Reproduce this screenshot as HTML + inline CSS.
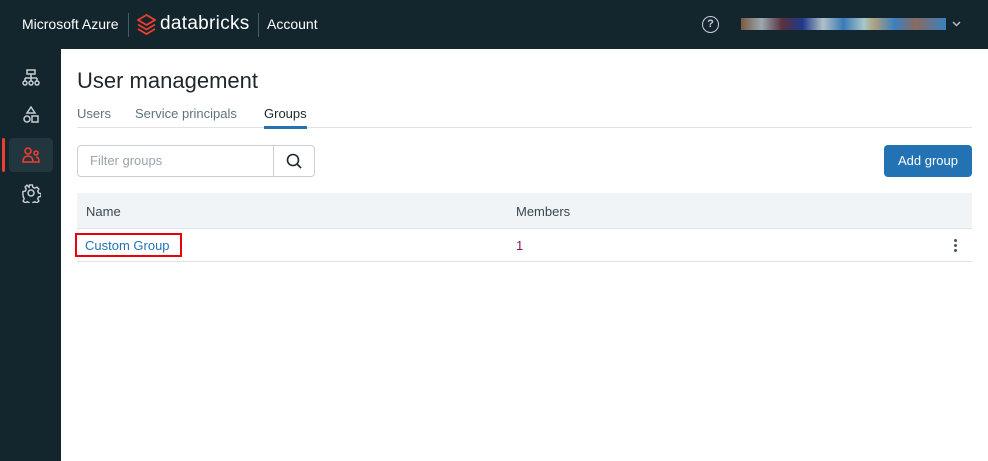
<!DOCTYPE html>
<html><head><meta charset="utf-8"><style>
*{box-sizing:border-box;margin:0;padding:0}
body{width:988px;height:461px;overflow:hidden;background:#fff;font-family:"Liberation Sans",sans-serif;position:relative}
.hdr{position:absolute;left:0;top:0;width:988px;height:49px;background:#13252d;color:#fff}
.side{position:absolute;left:0;top:49px;width:61px;height:412px;background:#13252d}
.main{position:absolute;left:61px;top:49px;right:0;bottom:0;background:#fff}
.in{position:absolute;left:0;top:1px;right:0;bottom:0}
.t{position:absolute;white-space:nowrap}
</style></head><body>
<div class="hdr">
 <div class="t" style="left:22px;top:16px;font-size:14px">Microsoft Azure</div>
 <div style="position:absolute;left:128px;top:13px;width:1px;height:24px;background:#4a5a62"></div>
 <svg style="position:absolute;left:137px;top:14px" width="19" height="21" viewBox="0 0 19 21"><g fill="none" stroke="#ef3e2d" stroke-width="1.8"><path d="M1 6l8.5-5 8.5 5-8.5 5z"/><path d="M1 10.5l8.5 5 8.5-5"/><path d="M1 15l8.5 5 8.5-5"/></g></svg>
 <div class="t" style="left:160px;top:13px;font-size:19px;letter-spacing:0.3px">databricks</div>
 <div style="position:absolute;left:258px;top:13px;width:1px;height:24px;background:#4a5a62"></div>
 <div class="t" style="left:267px;top:16px;font-size:14px">Account</div>
 <div style="position:absolute;left:702px;top:16px;width:17px;height:17px;border:1.6px solid #ccd;border-radius:50%;color:#ccd;font-size:11px;font-weight:bold;text-align:center;line-height:14px">?</div>
 <div style="position:absolute;left:741px;top:18px;width:205px;height:12px;background:linear-gradient(90deg,#7a5a40,#9aa8b0 10%,#5a3040 20%,#1e3a8a 30%,#b0c0c8 40%,#3a7ab8 50%,#a8c8c8 60%,#b0a080 65%,#3a80c0 75%,#8a6a60 85%,#3a80c0)"></div>
 <svg style="position:absolute;left:952px;top:21px" width="9" height="6" viewBox="0 0 9 6" fill="none" stroke="#bbb" stroke-width="1.5"><path d="M1 1l3.5 3.5L8 1"/></svg>
</div>
<div class="side">
 <svg style="position:absolute;left:22px;top:20px" width="18" height="18" viewBox="0 0 18 18" fill="none" stroke="#c8ced2" stroke-width="1.5"><rect x="5" y="1" width="8" height="4"/><path d="M9 5v4M3 9h12M3 9v3M9 9v3M15 9v3"/><circle cx="3" cy="14" r="2"/><circle cx="9" cy="14" r="2"/><circle cx="15" cy="14" r="2"/></svg>
 <svg style="position:absolute;left:22px;top:57px" width="18" height="18" viewBox="0 0 18 18" fill="none" stroke="#c8ced2" stroke-width="1.5"><path d="M9 1l4 6H5z"/><circle cx="5" cy="13" r="3"/><rect x="10" y="10" width="6" height="6"/></svg>
 <div style="position:absolute;left:2px;top:89px;width:3px;height:34px;background:#ef3e2d;border-radius:2px"></div>
 <div style="position:absolute;left:9px;top:89px;width:44px;height:34px;background:#22363f;border-radius:4px"></div>
 <svg style="position:absolute;left:22px;top:97px" width="18" height="18" viewBox="0 0 18 18" fill="none" stroke="#ef3e2d" stroke-width="1.6"><circle cx="6" cy="5" r="3"/><circle cx="14" cy="7" r="2"/><path d="M1 16c0-4 2-6 5-6s5 2 5 6zM12 16h5c0-3-1-5-3-5"/></svg>
 <svg style="position:absolute;left:21px;top:134px" width="20" height="20" viewBox="0 0 20 20" fill="none" stroke="#c8ced2" stroke-width="1.5"><circle cx="10" cy="10" r="3"/><path d="M8.5 1.5h3l.5 2.5 2 1 2.3-1.2 2 2-1.2 2.3 1 2 2.4.5v3l-2.4.5-1 2 1.2 2.3-2 2-2.3-1.2-2 1-.5 2.4h-3l-.5-2.4-2-1-2.3 1.2-2-2 1.2-2.3-1-2L1.5 11.5v-3l2.5-.5 1-2-1.2-2.3 2-2L8 4z" transform="scale(.95) translate(.5 .5)"/></svg>
</div>
<div class="main"><div class="in">
 <div class="t" style="left:16px;top:18px;font-size:22px;color:#1f272d">User management</div>
 <div class="t" style="left:16px;top:56px;font-size:13px;color:#5f7281">Users</div>
 <div class="t" style="left:74px;top:56px;font-size:13px;color:#5f7281">Service principals</div>
 <div class="t" style="left:203px;top:56px;font-size:13px;color:#1f272d">Groups</div>
 <div style="position:absolute;left:16px;top:77px;width:895px;height:1px;background:#dfe3e6"></div>
 <div style="position:absolute;left:203px;top:76px;width:43px;height:3px;background:#2272b4"></div>
 <div style="position:absolute;left:16px;top:95px;width:238px;height:32px;border:1px solid #c9d1d6;border-radius:4px"></div>
 <div style="position:absolute;left:212px;top:95px;width:1px;height:32px;background:#c9d1d6"></div>
 <div class="t" style="left:29px;top:103px;font-size:13px;color:#9aa4aa">Filter groups</div>
 <svg style="position:absolute;left:225px;top:103px" width="16" height="16" viewBox="0 0 16 16" fill="none" stroke="#1f272d" stroke-width="1.6"><circle cx="7" cy="7" r="5.5"/><path d="M11 11l4 4"/></svg>
 <div style="position:absolute;left:823px;top:95px;width:88px;height:32px;background:#2272b4;border-radius:4px;color:#fff;font-size:13px;text-align:center;line-height:32px">Add group</div>
 <div style="position:absolute;left:16px;top:143px;width:895px;height:36px;background:#f1f4f6;border-bottom:1px solid #dfe3e6"></div>
 <div class="t" style="left:25px;top:154px;font-size:13px;color:#394750">Name</div>
 <div class="t" style="left:455px;top:154px;font-size:13px;color:#394750">Members</div>
 <div style="position:absolute;left:16px;top:211px;width:895px;height:1px;background:#dfe3e6"></div>
 <div style="position:absolute;left:14px;top:183px;width:107px;height:24px;border:2px solid #e8000c"></div>
 <div class="t" style="left:24px;top:188px;font-size:13px;color:#2272b4">Custom Group</div>
 <div class="t" style="left:455px;top:188px;font-size:13px;color:#8a1850">1</div>
 <div style="position:absolute;left:893px;top:189px;width:3px;height:3px;border-radius:50%;background:#4a555c;box-shadow:0 5px #4a555c,0 10px #4a555c"></div>
</div></div>
</body></html>
